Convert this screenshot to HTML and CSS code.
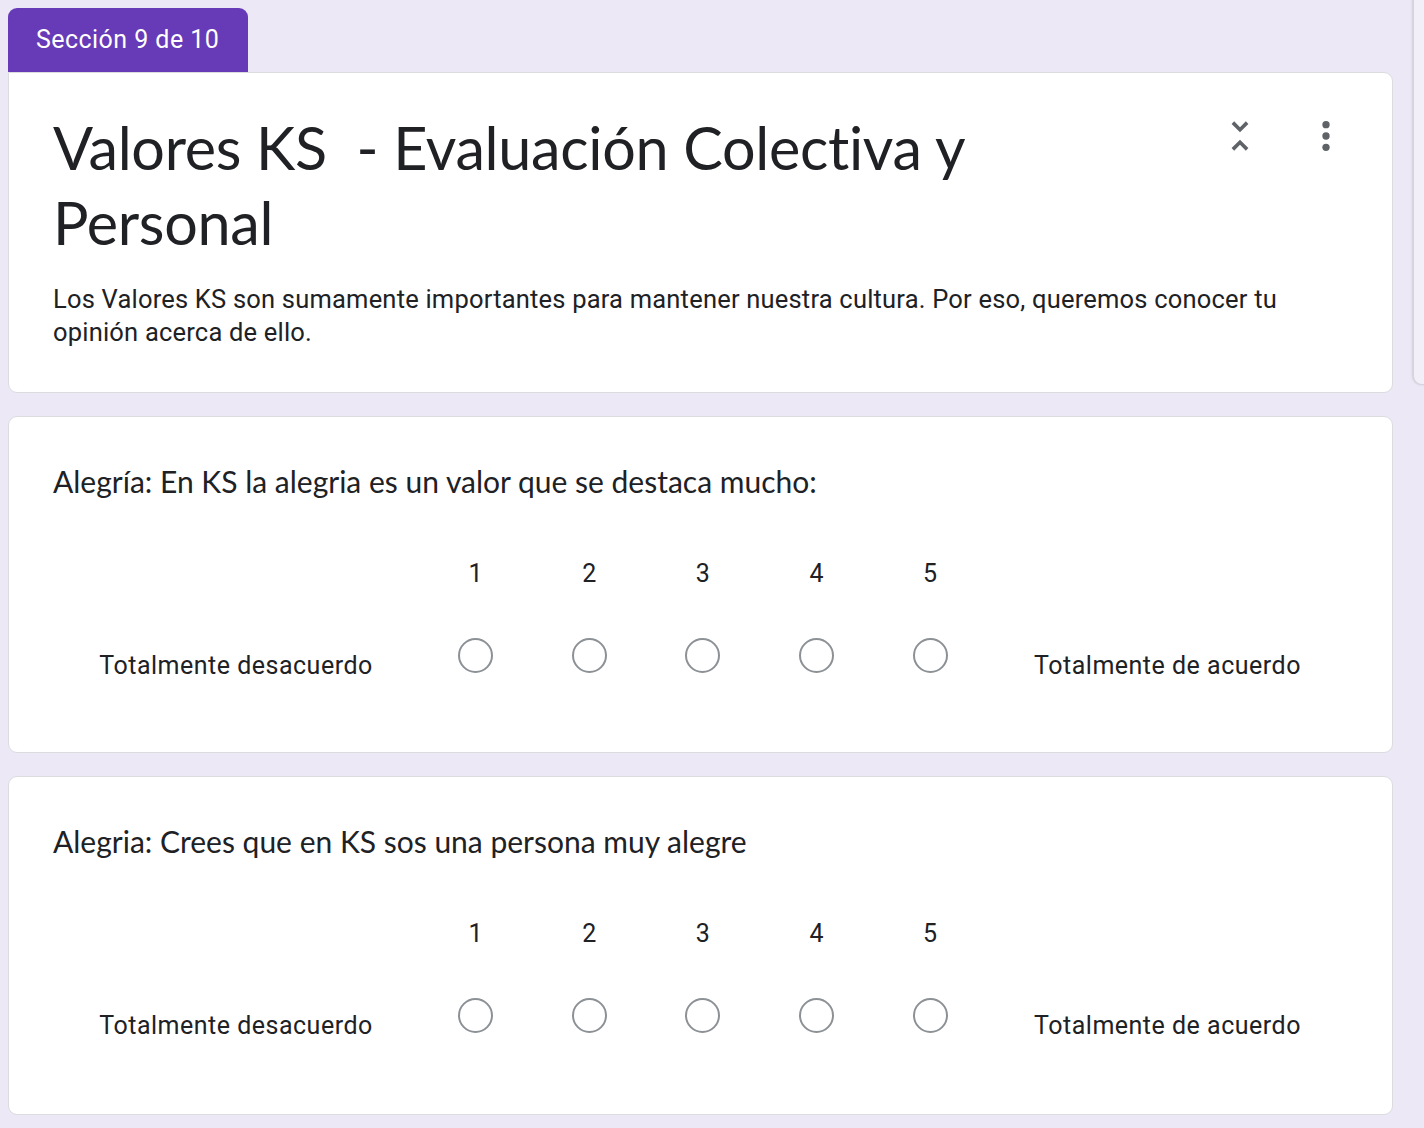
FILE: index.html
```html
<!DOCTYPE html>
<html lang="es">
<head>
<meta charset="utf-8">
<title>Sección 9 de 10</title>
<link rel="stylesheet" href="styles.css">
</head>
<body>
<div class="side-panel"></div>
<main class="page">
  <div class="tab">Sección 9 de 10</div>

  <section class="card header-card">
    <div class="header-row">
      <h1 class="title">Valores KS&nbsp; - Evaluación Colectiva y Personal</h1>
      <div class="actions">
        <button class="icon-btn" aria-label="Contraer sección">
          <svg viewBox="0 0 24 24" width="44" height="44"><path fill="#5f6368" d="M7.41 18.59L8.83 20 12 16.83 15.17 20l1.41-1.41L12 14l-4.59 4.59zm9.18-13.18L15.17 4 12 7.17 8.83 4 7.41 5.41 12 10l4.59-4.59z"/></svg>
        </button>
        <button class="icon-btn" aria-label="Más opciones">
          <svg viewBox="0 0 24 24" width="44" height="44"><circle fill="#5f6368" cx="12" cy="5.8" r="2"/><circle fill="#5f6368" cx="12" cy="12" r="2"/><circle fill="#5f6368" cx="12" cy="18.2" r="2"/></svg>
        </button>
      </div>
    </div>
    <p class="description">Los Valores KS son sumamente importantes para mantener nuestra cultura. Por eso, queremos conocer tu opinión acerca de ello.</p>
  </section>

  <section class="card question-card">
    <h2 class="question">Alegría: En KS la alegria es un valor que se destaca mucho:</h2>
    <div class="scale">
      <div class="num">1</div><div class="num">2</div><div class="num">3</div><div class="num">4</div><div class="num">5</div>
      <div class="label left">Totalmente desacuerdo</div>
      <div class="radio-cell"><span class="radio"></span></div>
      <div class="radio-cell"><span class="radio"></span></div>
      <div class="radio-cell"><span class="radio"></span></div>
      <div class="radio-cell"><span class="radio"></span></div>
      <div class="radio-cell"><span class="radio"></span></div>
      <div class="label right">Totalmente de acuerdo</div>
    </div>
  </section>

  <section class="card question-card last">
    <h2 class="question">Alegria: Crees que en KS sos una persona muy alegre</h2>
    <div class="scale">
      <div class="num">1</div><div class="num">2</div><div class="num">3</div><div class="num">4</div><div class="num">5</div>
      <div class="label left">Totalmente desacuerdo</div>
      <div class="radio-cell"><span class="radio"></span></div>
      <div class="radio-cell"><span class="radio"></span></div>
      <div class="radio-cell"><span class="radio"></span></div>
      <div class="radio-cell"><span class="radio"></span></div>
      <div class="radio-cell"><span class="radio"></span></div>
      <div class="label right">Totalmente de acuerdo</div>
    </div>
  </section>
</main>
</body>
</html>
```

FILE: styles.css
```css
html, body {
  margin: 0;
  padding: 0;
}

body {
  background: #ede8f6;
  color: #202124;
  font-family: Roboto, "Liberation Sans", sans-serif;
  overflow: hidden;
  position: relative;
  min-height: 1128px;
}

.page {
  width: 1385px;
  padding: 8px 0 0 8px;
  display: flex;
  flex-direction: column;
}

.side-panel {
  position: absolute;
  left: 1413px;
  top: -12px;
  width: 60px;
  height: 395px;
  background: #f2eff9;
  border: 1px solid #d6d3dc;
  border-radius: 9px;
  box-shadow: -1px 0 2px rgba(60, 64, 67, 0.15);
}

.tab {
  width: 212px;
  height: 64px;
  padding-left: 28px;
  background: #673ab7;
  color: #ffffff;
  border-radius: 9px 9px 0 0;
  font-size: 25px;
  line-height: 64px;
  letter-spacing: 0.45px;
}

.card {
  background: #ffffff;
  border: 1px solid #dadce0;
  border-radius: 9px;
  padding: 0 44px;
}

.card + .card {
  margin-top: 23px;
}

.header-card {
  border-top-left-radius: 0;
  padding-top: 37px;
  padding-bottom: 42px;
  height: 240px;
}

.header-row {
  display: flex;
  align-items: flex-start;
}

.title {
  flex: 1;
  max-width: 1100px;
  margin: 0;
  font-family: Lato, "Noto Sans", sans-serif;
  font-weight: 400;
  font-size: 59.3px;
  line-height: 75px;
  letter-spacing: -0.3px;
  color: #202124;
}

.actions {
  margin-left: auto;
  margin-right: -2px;
  margin-top: 2px;
  display: flex;
  gap: 38px;
}

.icon-btn {
  width: 48px;
  height: 48px;
  padding: 0;
  border: none;
  background: transparent;
  display: flex;
  align-items: center;
  justify-content: center;
}

.description {
  margin: 23px 0 0;
  font-size: 25.5px;
  line-height: 33px;
  letter-spacing: 0.2px;
  color: #202124;
}

.question-card {
  padding-top: 46px;
  padding-bottom: 72px;
}

.question-card.last {
  padding-bottom: 74px;
}

.question {
  margin: 0;
  font-family: Lato, "Noto Sans", sans-serif;
  font-weight: 400;
  font-size: 30px;
  line-height: 36px;
  letter-spacing: 0;
  color: #202124;
}

.scale {
  margin-top: 49px;
  display: grid;
  grid-template-columns: 366px repeat(5, 113.6px) 1fr;
  grid-template-rows: 50px 50px;
  row-gap: 32px;
}

.num {
  grid-row: 1;
  display: flex;
  align-items: center;
  justify-content: center;
  font-size: 25px;
  letter-spacing: 0.3px;
}

.num:nth-child(1) { grid-column: 2; }
.num:nth-child(2) { grid-column: 3; }
.num:nth-child(3) { grid-column: 4; }
.num:nth-child(4) { grid-column: 5; }
.num:nth-child(5) { grid-column: 6; }

.label {
  grid-row: 2;
  display: flex;
  align-items: center;
  justify-content: center;
  padding-top: 20px;
  font-size: 25px;
  letter-spacing: 0.5px;
}

.label.left { grid-column: 1; }
.label.right { grid-column: 7; }

.radio-cell {
  grid-row: 2;
  display: flex;
  align-items: center;
  justify-content: center;
}

.radio {
  width: 31px;
  height: 31px;
  border: 2px solid #8c9196;
  border-radius: 50%;
}
```
